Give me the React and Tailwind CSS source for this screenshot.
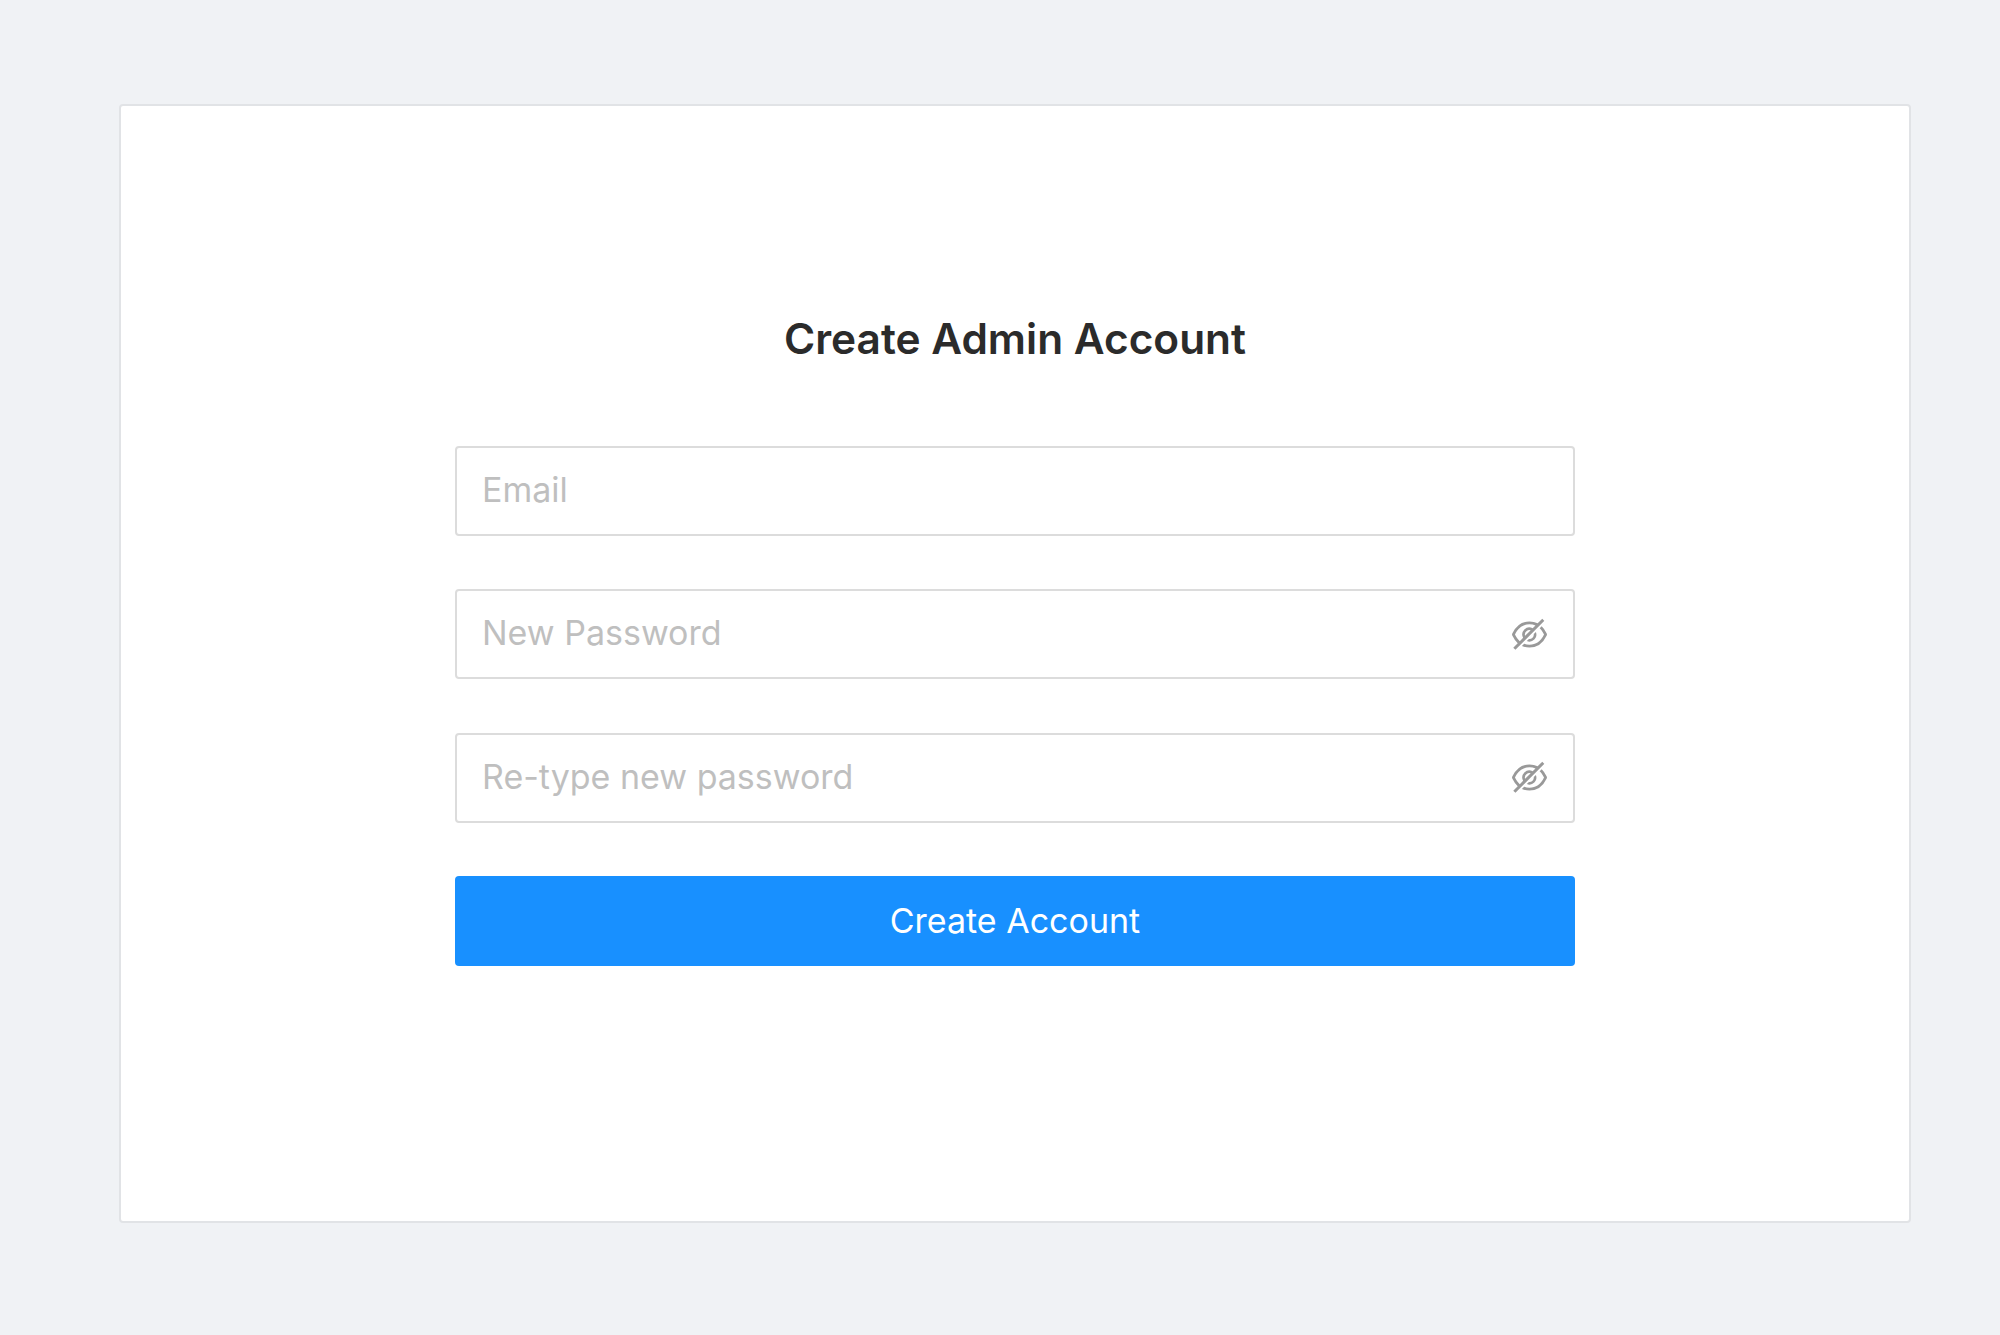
import { AiOutlineEyeInvisible } from 'react-icons/ai';

function Field({ placeholder, hasIcon }) {
  return (
    <div className="flex h-[90px] items-center justify-between rounded-[4px] border-2 border-[#dcdcdc] bg-white pl-[25px] pr-[23px]">
      <input
        type="text"
        placeholder={placeholder}
        className="w-full bg-transparent pb-[3px] text-[34px] text-[#262626] outline-none placeholder:text-[#bfbfbf]"
      />
      {hasIcon && <AiOutlineEyeInvisible className="size-[41px] shrink-0 text-[#999999]" />}
    </div>
  );
}

export default function App() {
  return (
    <div className="min-h-screen bg-[#f0f2f5] pl-[119px] pr-[89px] pt-[104px] font-['Inter',sans-serif]">
      <div className="h-[1119px] rounded-[4px] border-2 border-[#e1e3e6] bg-white px-[334px] pt-[201px]">
        <h1 className="mb-[75px] text-center text-[42.4px] leading-[64px] font-semibold text-[#2b2b2b]">
          Create Admin Account
        </h1>
        <div className="flex flex-col gap-[53.3px]">
          <Field placeholder="Email" />
          <Field placeholder="New Password" hasIcon />
          <Field placeholder="Re-type new password" hasIcon />
          <button className="h-[90px] rounded-[4px] bg-[#1890ff] text-[34px] text-white">
            Create Account
          </button>
        </div>
      </div>
    </div>
  );
}
